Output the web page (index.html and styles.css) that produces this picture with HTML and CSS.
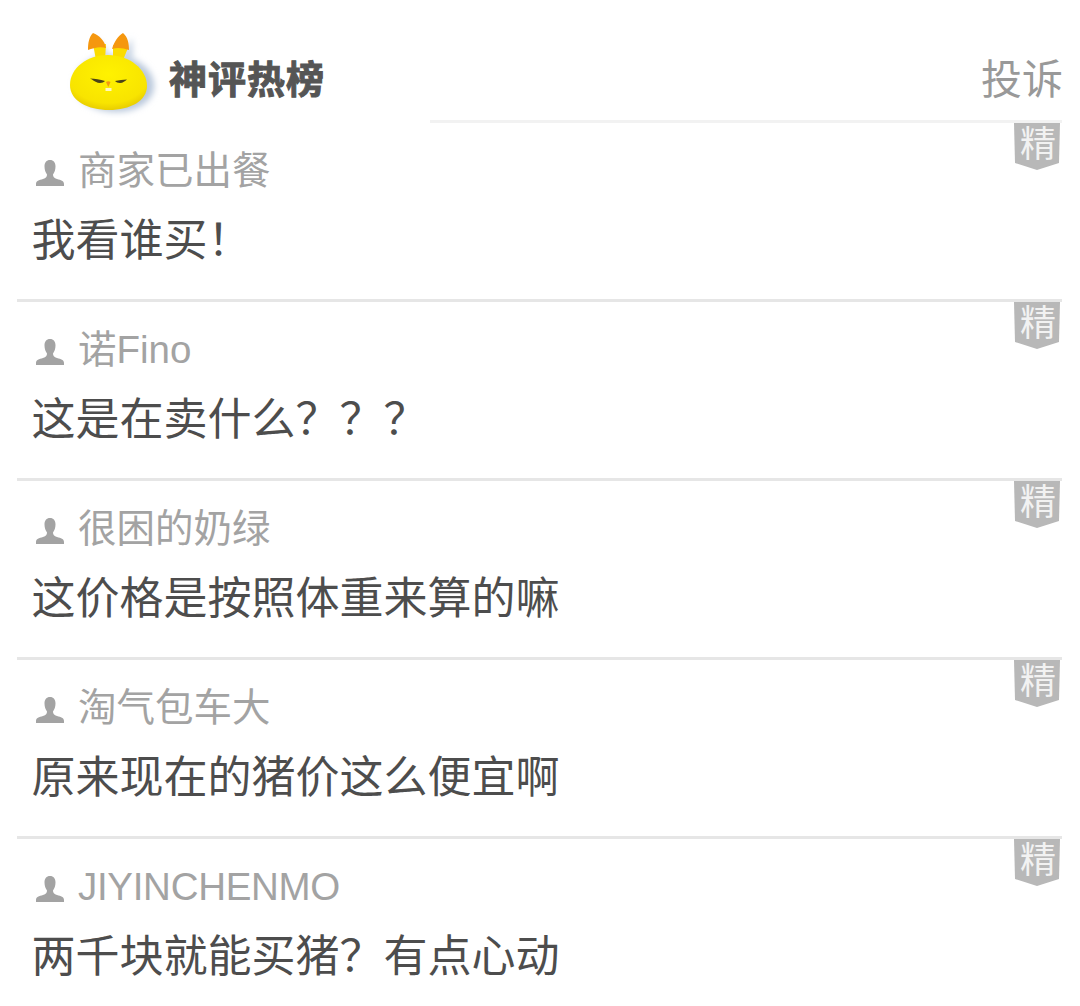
FILE: index.html
```html
<html>
<head>
<meta charset="utf-8">
<title>神评热榜</title>
<link rel="stylesheet" href="styles.css">
</head>
<body>

<svg width="0" height="0" class="defs">
  <defs>
    <radialGradient id="chick" cx="0.5" cy="0.35" r="0.75">
      <stop offset="0" stop-color="#fff200"/>
      <stop offset="0.7" stop-color="#f8e400"/>
      <stop offset="1" stop-color="#dcbc00"/>
    </radialGradient>
    <filter id="soft"><feGaussianBlur stdDeviation="3"/></filter>
    <filter id="edge"><feGaussianBlur stdDeviation="0.5"/></filter>
    <symbol id="user" viewBox="0 0 28 26">
      <path d="M14 0c3.500 0 5.500 2.500 5.500 6.500 0 3-1 6-2.500 8 0 2.500 1 3.500 4 4.500 4 1 7 2 7 5v2H0v-2c0-3 3-4 7-5 3-1 4-2 4-4.500-1.500-2-2.500-5-2.500-8C8.500 2.500 10.500 0 14 0z" fill="#a3a3a3" filter="url(#edge)"/>
    </symbol>
    <symbol id="badge" viewBox="0 0 46 47">
      <path d="M0 0h46l-1 40-22 7L1 40z" fill="#b8b8b8"/>
    </symbol>
  </defs>
</svg>

<div class="top">
  <div class="logo">
    <svg class="chick" width="94" height="88" viewBox="0 0 94 88">
      <g filter="url(#soft)">
        <path d="M9 54c0-17 17-29 38-29s41 13 41 31c0 15-17 26-38 26S9 71 9 54z" fill="#b9c8dc"/>
        <path d="M31 8l15 20-12 5zM66 8l-13 20 14 5z" fill="#c9d5e4"/>
      </g>
      <path d="M27 14l13 0-1 16h-9z" fill="#fbdc00"/>
      <path d="M47 15l15 3-5 12h-10z" fill="#fbdc00"/>
      <path d="M22 20c0-7 1-13 5-17 6 2 12 8 13 15-6-2-13 0-18 2z" fill="#f5970f"/>
      <path d="M46 19c2-7 6-13 11-16 5 4 6 11 6 17-6-2-12-3-17-1z" fill="#f5970f"/>
      <path d="M4 55c0-17 17-30 38-30s39 14 39 31c0 15-17 24-38 24S4 71 4 55z" fill="url(#chick)"/>
      <path d="M24 48.500c5 0 10 1 15 2.500-1 1-3 2-5 2-3 0-6-2-8-3.500z" fill="#4a4318"/>
      <path d="M61 49.500c-4 0-8 .500-12 1.500 1 1 3 2 5 2 3 0 5-2 7-3.500z" fill="#4a4318"/>
      <path d="M40 52c1.500-1 3-1 4.500 0l-2.200 5z" fill="#f5970f"/>
      <rect x="39.500" y="58" width="6" height="3" fill="#fff8c0"/>
    </svg>
    <span class="logo-text">神评热榜</span>
  </div>
  <a class="report">投诉</a>
</div>

<div class="list">
  <div class="item">
    <svg class="badge"><use href="#badge"/></svg><span class="badge-text">精</span>
    <div class="name"><svg class="user"><use href="#user"/></svg>商家已出餐</div>
    <div class="text">我看谁买！</div>
  </div>
  <div class="item">
    <svg class="badge"><use href="#badge"/></svg><span class="badge-text">精</span>
    <div class="name"><svg class="user"><use href="#user"/></svg>诺Fino</div>
    <div class="text">这是在卖什么？？？</div>
  </div>
  <div class="item">
    <svg class="badge"><use href="#badge"/></svg><span class="badge-text">精</span>
    <div class="name"><svg class="user"><use href="#user"/></svg>很困的奶绿</div>
    <div class="text">这价格是按照体重来算的嘛</div>
  </div>
  <div class="item">
    <svg class="badge"><use href="#badge"/></svg><span class="badge-text">精</span>
    <div class="name"><svg class="user"><use href="#user"/></svg>淘气包车大</div>
    <div class="text">原来现在的猪价这么便宜啊</div>
  </div>
  <div class="item">
    <svg class="badge"><use href="#badge"/></svg><span class="badge-text">精</span>
    <div class="name name-latin"><svg class="user"><use href="#user"/></svg>JIYINCHENMO</div>
    <div class="text">两千块就能买猪？有点心动</div>
  </div>
</div>

</body>
</html>
```

FILE: styles.css
```css
html, body {
  margin: 0;
  padding: 0;
  background: #fff;
  height: 1006px;
  overflow: hidden;
  font-family: "Liberation Sans", "Noto Sans CJK SC", sans-serif;
}

.defs {
  display: block;
  height: 0;
}

.top {
  display: flex;
  justify-content: space-between;
  align-items: flex-start;
  height: 123px;
  margin-right: 18px;
  position: relative;
}

.top::after {
  content: "";
  position: absolute;
  left: 430px;
  right: 0;
  bottom: 0;
  height: 3px;
  background: #f2f2f2;
}

.logo {
  display: flex;
  align-items: flex-start;
  padding: 30px 0 0 66px;
}

.chick {
  display: block;
}

.logo-text {
  font-size: 38px;
  font-weight: 700;
  letter-spacing: 1px;
  line-height: 44px;
  color: #555;
  -webkit-text-stroke: 1px #555;
  margin: 28px 0 0 9px;
}

.report {
  font-size: 41px;
  line-height: 48px;
  color: #999;
  margin: 56px -1px 0 0;
}

.item {
  position: relative;
  height: 176px;
  margin: 0 18px 0 17px;
  border-bottom: 3px solid #e6e6e6;
}

.item:last-child {
  border-bottom: 0;
}

.badge {
  position: absolute;
  top: 0;
  right: 2px;
  width: 46px;
  height: 47px;
}

.badge-text {
  position: absolute;
  top: 1px;
  right: 6px;
  font-size: 36px;
  line-height: 42px;
  color: #f2f2f2;
}

.name {
  display: flex;
  align-items: flex-start;
  padding: 26px 0 0 19px;
  height: 46px;
  font-size: 38.500px;
  line-height: 44px;
  color: #a3a3a3;
}

.name-latin {
  letter-spacing: -0.3px;
}

.user {
  width: 28px;
  height: 26px;
  margin: 11px 14px 0 0;
}

.text {
  padding: 20px 0 0 14.500px;
  font-size: 44px;
  line-height: 52px;
  color: #4d4d4d;
}
```
